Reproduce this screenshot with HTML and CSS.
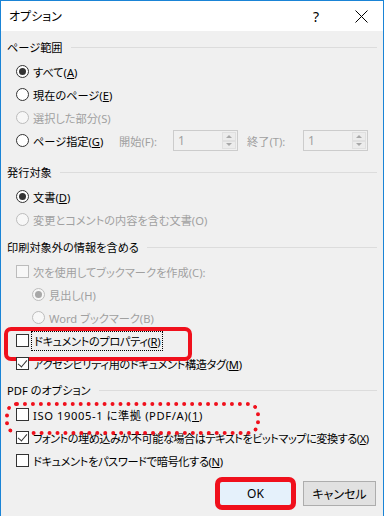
FILE: index.html
```html
<!DOCTYPE html>
<html lang="ja">
<head>
  <meta charset="UTF-8" />
  <meta name="viewport" content="width=device-width, initial-scale=1.0"/>
  <title>オプション</title>
  <link rel="stylesheet" href="styles.css">
</head>
<body>
  <div class="window">
    <div class="titlebar">
      <span class="title">オプション</span>
      <span class="help">?</span>
      <span class="close">
        <svg width="13" height="13" viewBox="0 0 13 13"><path d="M0.5 0.5 L12.5 12.5 M12.5 0.5 L0.5 12.5" stroke="#000" stroke-width="1" fill="none"/></svg>
      </span>
    </div>

    <div class="content">
      <!-- ページ範囲 -->
      <div class="group-head"><span>ページ範囲</span></div>
      <div class="row"><span class="radio checked"></span><span>すべて(<u>A</u>)</span></div>
      <div class="row"><span class="radio"></span><span>現在のページ(<u>E</u>)</span></div>
      <div class="row disabled"><span class="radio"></span><span>選択した部分(S)</span></div>
      <div class="row range-row">
        <span class="radio"></span>
        <span class="range-label">ページ指定(<u>G</u>)</span>
        <span class="spin-label">開始(F):</span>
        <span class="spinbox"><span class="spin-value">1</span><span class="spin-btns"><span class="up"></span><span class="down"></span></span></span>
        <span class="spin-label to">終了(T):</span>
        <span class="spinbox"><span class="spin-value">1</span><span class="spin-btns"><span class="up"></span><span class="down"></span></span></span>
      </div>

      <!-- 発行対象 -->
      <div class="group-head second"><span>発行対象</span></div>
      <div class="row"><span class="radio checked"></span><span>文書(<u>D</u>)</span></div>
      <div class="row disabled"><span class="radio"></span><span>変更とコメントの内容を含む文書(O)</span></div>

      <!-- 印刷対象外の情報を含める -->
      <div class="group-head"><span>印刷対象外の情報を含める</span></div>
      <div class="row disabled"><span class="check"></span><span>次を使用してブックマークを作成(C):</span></div>
      <div class="row sub disabled"><span class="radio checked"></span><span>見出し(H)</span></div>
      <div class="row sub disabled"><span class="radio"></span><span>Word ブックマーク(B)</span></div>
      <div class="row mark-box"><span class="check"></span><span class="focus tight">ドキュメントのプロパティ(<u>R</u>)</span></div>
      <div class="row"><span class="check checked"></span><span class="tight">アクセシビリティ用のドキュメント構造タグ(<u>M</u>)</span></div>

      <!-- PDF のオプション -->
      <div class="group-head pdf"><span>PDF のオプション</span></div>
      <div class="row mark-dots"><span class="check"></span><span class="wide">ISO 19005-1 に準拠 (PDF/A)(<u>1</u>)</span></div>
      <div class="row"><span class="check checked"></span><span class="tighter">フォントの埋め込みが不可能な場合はテキストをビットマップに変換する(<u>X</u>)</span></div>
      <div class="row"><span class="check"></span><span class="tight">ドキュメントをパスワードで暗号化する(<u>N</u>)</span></div>

      <div class="buttons">
        <button class="btn ok">OK</button>
        <button class="btn">キャンセル</button>
      </div>
    </div>
  </div>
</body>
</html>
```

FILE: styles.css
```css
* {
  box-sizing: border-box;
}

body {
  margin: 0;
  font-family: "Noto Sans", "Noto Sans CJK JP", sans-serif;
  font-size: 11.2px;
  font-feature-settings: "palt";
  color: #000;
}

.window {
  width: 384px;
  height: 516px;
  background: #f0f0f0;
  border: 1px solid #1a84d6;
  border-bottom: none;
  overflow: hidden;
}

.titlebar {
  display: flex;
  align-items: center;
  height: 30px;
  background: #fff;
  padding-left: 8px;
  font-size: 12px;
}

.title {
  flex: 1;
}

.help {
  font-size: 14px;
  width: 12px;
  margin-right: 30px;
}

.close {
  display: flex;
  width: 13px;
  margin-right: 15px;
}

.content {
  padding: 0 6px;
}

.group-head {
  display: flex;
  align-items: center;
  gap: 8px;
  height: 24px;
  margin-top: 4px;
  margin-bottom: 1px;
}

.group-head::after {
  content: "";
  flex: 1;
  border-top: 1px solid #dcdcdc;
}

.group-head.second {
  margin-top: 8px;
}

.group-head.pdf {
  margin-top: 3px;
}

.row {
  display: flex;
  align-items: center;
  gap: 4px;
  height: 23px;
  padding-left: 9px;
  white-space: nowrap;
}

.row.sub {
  padding-left: 25px;
}

.row.disabled {
  color: #a0a0a0;
}

.tight {
  letter-spacing: -0.35px;
}

.tighter {
  letter-spacing: -0.5px;
}

.wide {
  letter-spacing: 0.6px;
}

u {
  text-underline-offset: 1px;
}

/* radio / checkbox */
.radio,
.check {
  flex: none;
  position: relative;
  width: 13px;
  height: 13px;
  background: #fff;
  border: 1px solid #333;
}

.radio {
  border-radius: 50%;
}

.radio.checked::after {
  content: "";
  position: absolute;
  left: 2px; top: 2px;
  width: 7px; height: 7px;
  border-radius: 50%;
  background: #333;
}

.check.checked::after {
  content: "";
  position: absolute;
  left: 3px; top: 0px;
  width: 4px; height: 8px;
  border: solid #333;
  border-width: 0 1.5px 1.5px 0;
  transform: rotate(40deg);
}

.disabled .radio,
.disabled .check {
  border-color: #bcbcbc;
  background: #f7f7f7;
}

.disabled .radio.checked::after {
  background: #a8a8a8;
}

/* page range row */
.range-row {
  gap: 0;
}

.range-row .radio {
  margin-right: 4px;
}

.range-label {
  width: 86px;
}

.spin-label {
  color: #a0a0a0;
  width: 54px;
}

.spin-label.to {
  margin-left: 9px;
  width: 56px;
}

.spinbox {
  display: flex;
  width: 65px;
  height: 21px;
  border: 1px solid #cccccc;
  background: #f0f0f0;
  color: #a0a0a0;
  font-size: 12px;
}

.spin-value {
  flex: 1;
  padding-left: 4px;
  line-height: 19px;
}

.spin-btns {
  display: flex;
  flex-direction: column;
  width: 16px;
  padding: 1px;
}

.spin-btns span {
  flex: 1;
  display: flex;
  align-items: center;
  justify-content: center;
  background: #ececec;
  border: 1px solid #e0e0e0;
}

.spin-btns .up::before {
  content: "";
  border: 3px solid transparent;
  border-bottom: 3px solid #a8a8a8;
  border-top: none;
}

.spin-btns .down::before {
  content: "";
  border: 3px solid transparent;
  border-top: 3px solid #a8a8a8;
  border-bottom: none;
}

/* annotations */
.mark-box,
.mark-dots {
  position: relative;
}

.mark-box::after {
  content: "";
  position: absolute;
  left: -3px; top: -2px;
  width: 180px; height: 26px;
  border: 4px solid #f0101c;
  border-radius: 7px;
}

.mark-dots::after {
  content: "";
  position: absolute;
  left: -2px; top: -1px;
  width: 247px; height: 25px;
  border: 4px dotted #f0101c;
  border-radius: 12px;
}

.focus {
  outline: 1px dotted #000;
  outline-offset: 1px;
  padding: 0 1px;
}

/* buttons */
.buttons {
  display: flex;
  justify-content: flex-end;
  gap: 11px;
  margin-top: 9px;
  padding-right: 1px;
}

.btn {
  position: relative;
  width: 73px;
  height: 25px;
  font: inherit;
  font-size: 12px;
  color: #000;
  background: #e1e1e1;
  border: 1px solid #adadad;
  padding: 0;
}

.btn.ok {
  background: #e5f1fb;
  border-color: #0078d7;
}

.btn.ok::after {
  content: "";
  position: absolute;
  left: -5px; top: -5px; right: -5px; bottom: -5px;
  border: 5px solid #f0101c;
  border-radius: 7px;
}
```
